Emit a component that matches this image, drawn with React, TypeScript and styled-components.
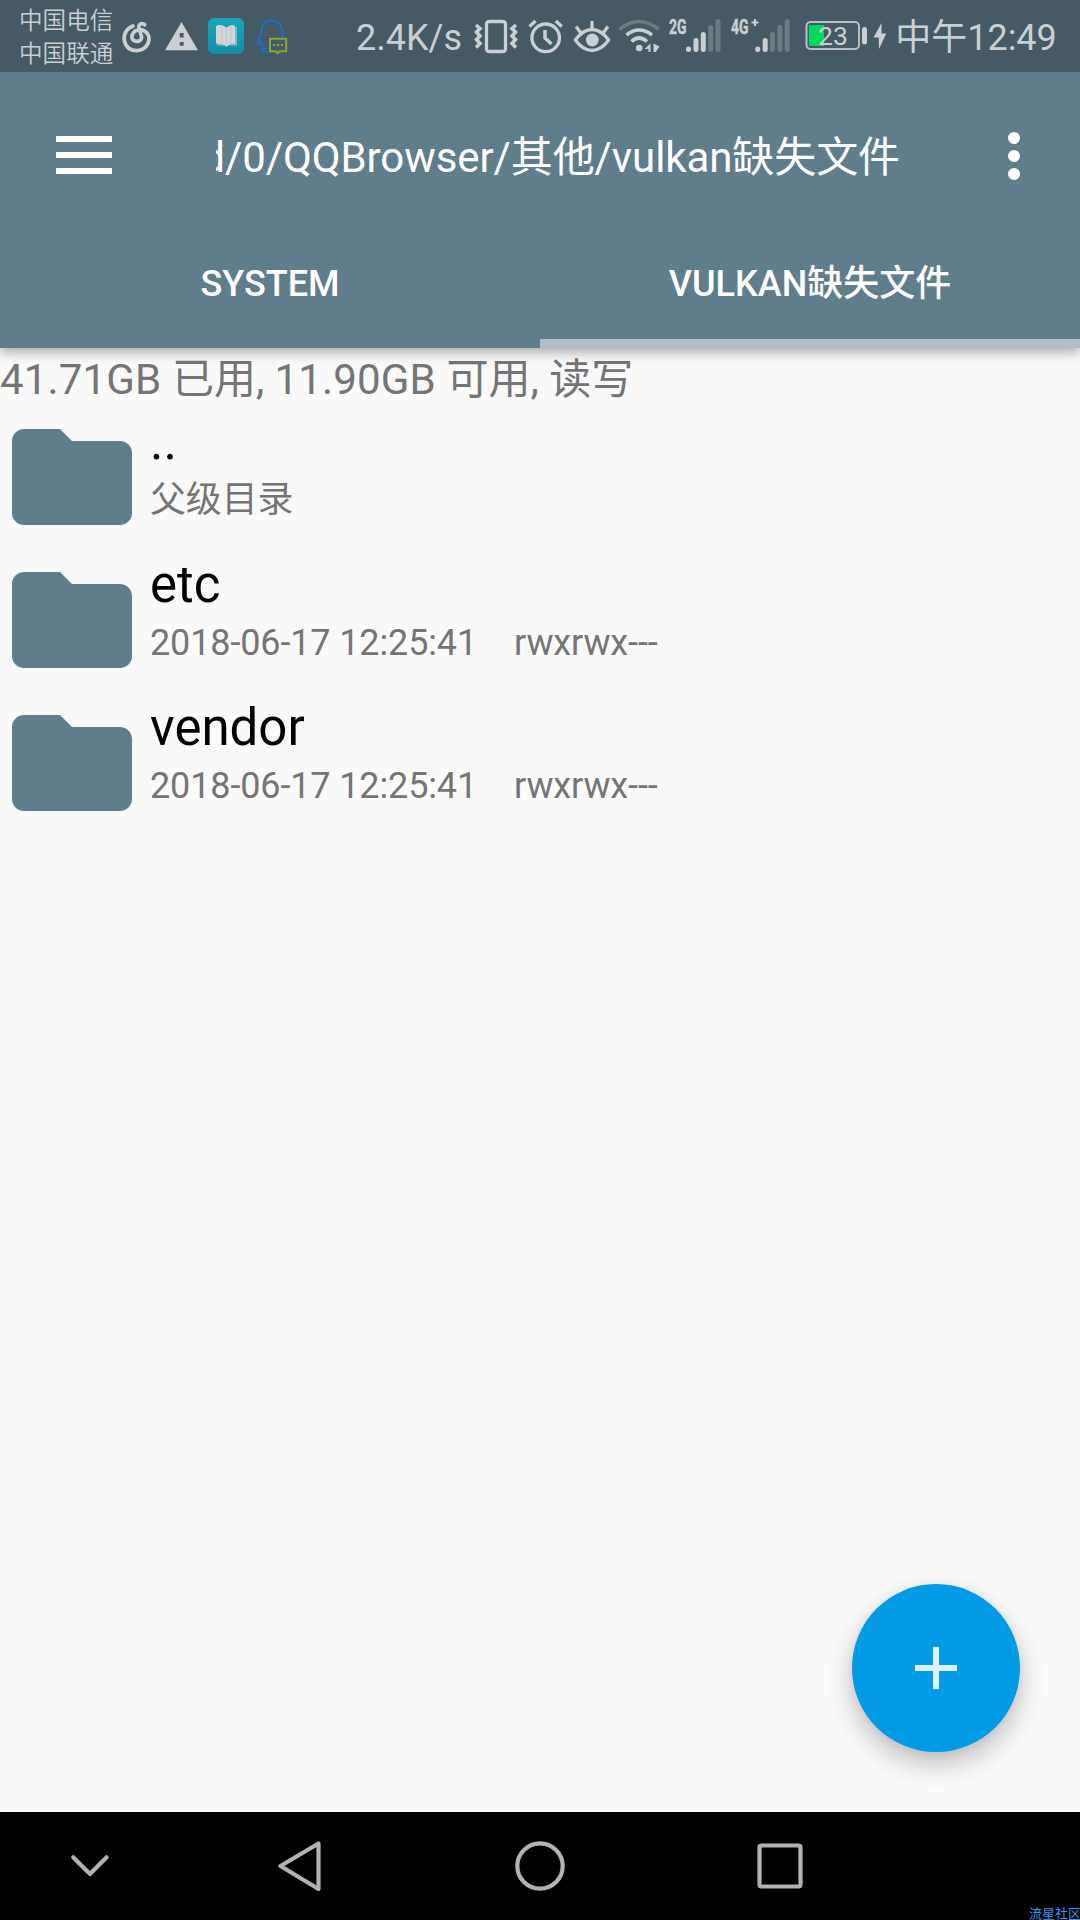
import styled, { createGlobalStyle } from 'styled-components';

const GlobalStyle = createGlobalStyle`
  body {
    margin: 0;
    background: #fafafa;
    font-family: Roboto, 'Noto Sans CJK SC', sans-serif;
  }
  * {
    box-sizing: border-box;
  }
`;

const Screen = styled.div`
  display: flex;
  flex-direction: column;
  width: 1080px;
  height: 1920px;
  overflow: hidden;
  background: #fafafa;
`;

const StatusBar = styled.div`
  position: relative;
  z-index: 1;
  display: flex;
  flex-shrink: 0;
  height: 72px;
  background: #455a64;
  color: #c9cfd3;
`;

const Carriers = styled.div`
  width: 102px;
  padding: 5px 0 0 19px;
  font-size: 23.6px;
  font-weight: 350;
  line-height: 33px;
  white-space: nowrap;
`;

const StatusIcon = styled.svg<{ $left?: number }>`
  display: block;
  flex-shrink: 0;
  height: 72px;
  margin-left: ${(p) => p.$left || 0}px;
`;

const StatusText = styled.span<{ $left: number; $width: number }>`
  flex-shrink: 0;
  width: ${(p) => p.$width}px;
  margin-left: ${(p) => p.$left}px;
  font-size: 36px;
  line-height: 76px;
  white-space: nowrap;
`;

const Header = styled.header`
  position: relative;
  flex-shrink: 0;
  height: 276px;
  background: #607d8b;
  color: #fff;
  box-shadow: 0 4px 12px rgba(0, 0, 0, 0.34);
`;

const Toolbar = styled.div`
  display: flex;
  align-items: center;
  height: 168px;
  padding: 0 48px 0 56px;
`;

const MenuButton = styled.button`
  display: flex;
  flex-direction: column;
  gap: 10px;
  width: 56px;
  margin-bottom: 2px;
  padding: 0;
  border: none;
  background: none;
`;

const MenuLine = styled.span`
  height: 6px;
  background: #fff;
`;

const PathTitle = styled.div`
  display: flex;
  justify-content: flex-end;
  width: 684px;
  margin: 3px 0 0 104px;
  overflow: hidden;
  font-size: 42px;
  letter-spacing: -0.09px;
  line-height: 60px;
  white-space: nowrap;
`;

const MoreButton = styled.button`
  display: flex;
  flex-direction: column;
  gap: 6px;
  margin-left: 108px;
  padding: 0;
  border: none;
  background: none;
`;

const Dot = styled.span`
  width: 12px;
  height: 12px;
  border-radius: 50%;
  background: #fff;
`;

const Tabs = styled.div`
  display: flex;
  height: 108px;
`;

const Tab = styled.div<{ $active?: boolean }>`
  flex: 1;
  border-bottom: 9px solid ${(p) => (p.$active ? '#b0bec5' : 'transparent')};
  font-size: 36px;
  font-weight: 500;
  line-height: 88px;
  text-align: center;
`;

const Content = styled.main`
  flex: 1;
`;

const StorageInfo = styled.div`
  height: 57px;
  color: #757575;
  font-size: 42px;
  line-height: 63px;
  white-space: nowrap;
`;

const Amount = styled.span`
  letter-spacing: 0.15px;
`;

const FileRow = styled.div`
  display: flex;
  height: 143px;
`;

const FolderIcon = styled.svg`
  display: block;
  flex-shrink: 0;
  width: 144px;
  height: 144px;
  fill: #607d8b;
`;

const FileText = styled.div`
  padding: 7px 0 0 6px;
`;

const FileName = styled.div`
  height: 60px;
  color: #000;
  font-size: 51px;
  line-height: 60px;
`;

const FileMeta = styled.div`
  display: flex;
  gap: 37px;
  color: #757575;
  font-size: 36px;
  line-height: 56px;
  letter-spacing: -0.13px;
  white-space: nowrap;
`;

const AddButton = styled.button`
  position: absolute;
  left: 852px;
  top: 1584px;
  display: flex;
  align-items: center;
  justify-content: center;
  width: 168px;
  height: 168px;
  padding: 0;
  border: none;
  border-radius: 50%;
  background: #039be5;
  box-shadow: 0 12px 28px rgba(0, 0, 0, 0.24), 0 2px 8px rgba(0, 0, 0, 0.06);
`;

const NavBar = styled.nav`
  position: relative;
  display: flex;
  align-items: center;
  flex-shrink: 0;
  height: 108px;
  padding-left: 65px;
  background: #000;

  svg {
    display: block;
    fill: none;
    stroke: #b2b2b2;
    stroke-width: 4.2;
    stroke-linecap: round;
    stroke-linejoin: round;
  }
`;

const NavIcon = styled.svg<{ $left?: number }>`
  margin-left: ${(p) => p.$left || 0}px;
`;

const Watermark = styled.span`
  position: absolute;
  right: -1px;
  bottom: -3px;
  color: #2f9bf0;
  font-size: 13px;
  line-height: 19px;
`;

const files = [
  { name: '..', meta: ['父级目录'] },
  { name: 'etc', meta: ['2018-06-17 12:25:41', 'rwxrwx---'] },
  { name: 'vendor', meta: ['2018-06-17 12:25:41', 'rwxrwx---'] },
];

// x and top of each signal bar, they all end on the same line
const bars = [
  [2.5, 46.5],
  [10, 38],
  [17.3, 32],
  [24.7, 25],
  [32, 19],
];

function Signal({ label, plus, level, left, offset }: { label: string; plus?: boolean; level: number; left: number; offset: number }) {
  return (
    <StatusIcon $left={left} width={offset + 35} viewBox={`0 0 ${offset + 35} 72`}>
      <text
        x="0"
        y="33.8"
        fontSize="21"
        fontWeight="700"
        fill="#c9cfd3"
        stroke="#c9cfd3"
        strokeWidth="0.5"
        textLength="17.5"
        lengthAdjust="spacingAndGlyphs"
      >
        {label}
      </text>
      {plus && <path d="M20.5 22.5h7M24 19v7" stroke="#c9cfd3" strokeWidth="2.2" />}
      {bars.map(([x, top], i) => (
        <line
          key={x}
          x1={offset + x}
          x2={offset + x}
          y1={top + 2.5}
          y2={49.5}
          stroke={i < level ? '#c9cfd3' : '#6b7b83'}
          strokeWidth="5"
          strokeLinecap="round"
        />
      ))}
    </StatusIcon>
  );
}

function Status() {
  return (
    <StatusBar>
      <Carriers>
        <div>中国电信</div>
        <div>中国联通</div>
      </Carriers>
      <StatusIcon $left={18} width="34" viewBox="120 0 34 72" fill="none" stroke="#c9cfd3" strokeWidth="3.7" strokeLinecap="round">
        <path d="M133 26C126 28.5 123.3 35 124.4 41C126 48 131.5 50.6 137 50.6C144 50.6 149 45 149 38.8C149 32.5 143.5 29.2 138.6 29.8C133.6 30.5 131.5 34.5 132 37.8C132.8 42.3 141.2 43 141.6 37.6C141.6 34 138 28.5 139 25.6C140 23.2 143 23 144.6 24.8" />
      </StatusIcon>
      <StatusIcon $left={11} width="33" viewBox="165 0 33 72">
        <path d="M181.5 22L198 50.3H165z" fill="#c9cfd3" />
        <path d="M179.8 33h3.8v4.6h-3.8zM179.8 42h3.8v3.8h-3.8z" fill="#455a64" />
      </StatusIcon>
      <StatusIcon $left={10} width="36" viewBox="208 0 36 72">
        <defs>
          <linearGradient id="book" x1="0" x2="0" y1="0" y2="1">
            <stop offset="0" stopColor="#18a6bb" />
            <stop offset="1" stopColor="#158da4" />
          </linearGradient>
        </defs>
        <rect x="208" y="18" width="36" height="36" rx="6" fill="url(#book)" />
        <path d="M217 27h20v18.5h-20z" fill="#7dbbc6" />
        <path d="M216 27Q216 25 219 25Q224 25 226.5 28Q229 25 233 25Q235 25 235 27V43.5Q229 43 226.5 47Q223 43 216 43.5z" fill="#cfd6d8" />
        <path d="M226.5 28V46M231 26V44M222 26V43.5" stroke="#bcc8cc" strokeWidth="1" />
      </StatusIcon>
      <StatusIcon $left={12} width="32" viewBox="256 0 32 72" fill="none">
        <path
          d="M282.8 37C282.7 27 279 20.5 271.5 20.5C264 20.5 261.5 26 261.5 32C261.5 35 258 38 257.8 43.5C258.3 44.5 260.5 42 261 41.5C261.3 45.5 264 47.3 265 48C261 49 261 52.2 264 52.2H270"
          stroke="#1a6fc9"
          strokeWidth="2"
        />
        <path d="M270 38.8H286.2V51.3H280L277.5 53.3L276 51.3H270z" stroke="#86a832" strokeWidth="2" />
        <path d="M273.2 45h2.2M277 45h2.2M280.8 45h2.2" stroke="#86a832" strokeWidth="2.2" />
      </StatusIcon>

      <StatusText $left={68} $width={106}>2.4K/s</StatusText>

      <StatusIcon $left={12} width="44" viewBox="474 0 44 72" fill="none" stroke="#c9cfd3" strokeWidth="3.3">
        <rect x="486.5" y="21.5" width="19" height="30" rx="2.5" />
        <path d="M476 25L480 28.5L476.5 32L480 36L476.5 39.5L480 43.5L476 47.5" strokeWidth="3.6" />
        <path d="M516 25L512 28.5L515.5 32L512 36L515.5 39.5L512 43.5L516 47.5" strokeWidth="3.6" />
      </StatusIcon>
      <StatusIcon $left={10} width="36" viewBox="528 0 36 72" fill="none" stroke="#c9cfd3" strokeWidth="3.3">
        <circle cx="545.7" cy="37.8" r="13.8" />
        <path d="M529.5 26.5L535.5 21M561.8 26.5L555.8 21" />
        <path d="M545 30V38L551.5 44" strokeWidth="3.5" />
      </StatusIcon>
      <StatusIcon $left={9} width="38" viewBox="573 0 38 72" fill="none" stroke="#c9cfd3" strokeWidth="3.3">
        <path d="M575.3 40Q583 29.5 592 29.5Q601 29.5 608.7 40Q601 50.5 592 50.5Q583 50.5 575.3 40z" strokeLinejoin="round" />
        <circle cx="592.3" cy="40" r="6.4" fill="#c9cfd3" stroke="none" />
        <path d="M592 21V29M576 26.5L580.5 32.5M608 26.5L603.5 32.5" />
      </StatusIcon>
      <StatusIcon $left={8} width="41" viewBox="619 0 41 72" fill="none" stroke="#c9cfd3" strokeWidth="3.6">
        <path d="M620.5 28.5Q639 14.5 657.5 28.5" stroke="#6b7b83" strokeLinecap="round" />
        <path d="M626.5 35Q639 25 652 35" />
        <path d="M631.5 41.5Q639 34.5 647 41.5" />
        <circle cx="639.2" cy="48" r="3.3" fill="#c9cfd3" stroke="none" />
        <path d="M650.5 43.5V52H648.5V49H644.5zM653.5 43.5L659.5 46.5L655.8 52H653.5z" fill="#c9cfd3" stroke="none" />
      </StatusIcon>
      <Signal label="2G" level={3} left={8.5} offset={17} />
      <Signal label="4G" plus level={2} left={10} offset={24.2} />

      <StatusIcon $left={14} width="64" viewBox="804 0 64 72">
        <rect x="809" y="25" width="15" height="21" fill="#00d85a" />
        <rect x="806.5" y="22" width="52.5" height="27" rx="4" fill="none" stroke="#b7bfc3" strokeWidth="2" />
        <rect x="862" y="27" width="5" height="17.5" rx="2.5" fill="#c9cfd3" />
        <text x="818" y="45" fontSize="26.5" fill="#c9cfd3">
          23
        </text>
      </StatusIcon>
      <StatusIcon $left={4} width="15" viewBox="872 0 15 72">
        <path d="M881.5 23L873.5 37.5H878.7L879 49L886.3 33.5H881.5z" fill="#c9cfd3" />
      </StatusIcon>
      <StatusText $left={8.5} $width={162}>中午12:49</StatusText>
    </StatusBar>
  );
}

function App() {
  return (
    <Screen>
      <GlobalStyle />
      <Status />
      <Header>
        <Toolbar>
          <MenuButton aria-label="menu">
            <MenuLine />
            <MenuLine />
            <MenuLine />
          </MenuButton>
          <PathTitle>d/0/QQBrowser/其他/vulkan缺失文件</PathTitle>
          <MoreButton aria-label="more">
            <Dot />
            <Dot />
            <Dot />
          </MoreButton>
        </Toolbar>
        <Tabs>
          <Tab>SYSTEM</Tab>
          <Tab $active>VULKAN缺失文件</Tab>
        </Tabs>
      </Header>

      <Content>
        <StorageInfo>
          <Amount>41.71GB </Amount>已用, <Amount>11.90GB </Amount>可用, 读写
        </StorageInfo>
        {files.map((file) => (
          <FileRow key={file.name}>
            <FolderIcon viewBox="0 0 24 24">
              <path d="M10 4H4c-1.1 0-2 .9-2 2v12c0 1.1.9 2 2 2h16c1.1 0 2-.9 2-2V8c0-1.1-.9-2-2-2h-8l-2-2z" />
            </FolderIcon>
            <FileText>
              <FileName>{file.name}</FileName>
              <FileMeta>
                {file.meta.map((m) => (
                  <span key={m}>{m}</span>
                ))}
              </FileMeta>
            </FileText>
          </FileRow>
        ))}
      </Content>

      <AddButton aria-label="add">
        <svg width="42" height="42" viewBox="0 0 42 42">
          <path d="M18 0h6v18h18v6H24v18h-6V24H0v-6h18z" fill="#dcf1fb" />
        </svg>
      </AddButton>

      <NavBar>
        <NavIcon width="50" height="50" viewBox="65 1841 50 50">
          <path d="M73.2 1857.2L90 1874L106.6 1857.2" />
        </NavIcon>
        <NavIcon $left={160} width="50" height="50" viewBox="275 1841 50 50">
          <path d="M280.5 1866L318.5 1843.5V1889z" />
        </NavIcon>
        <NavIcon $left={190} width="50" height="50" viewBox="515 1841 50 50">
          <circle cx="540" cy="1866" r="22.7" />
        </NavIcon>
        <NavIcon $left={190} width="50" height="50" viewBox="755 1841 50 50">
          <rect x="759.5" y="1845.5" width="41" height="41" rx="2" />
        </NavIcon>
        <Watermark>流星社区</Watermark>
      </NavBar>
    </Screen>
  );
}

export default App;
